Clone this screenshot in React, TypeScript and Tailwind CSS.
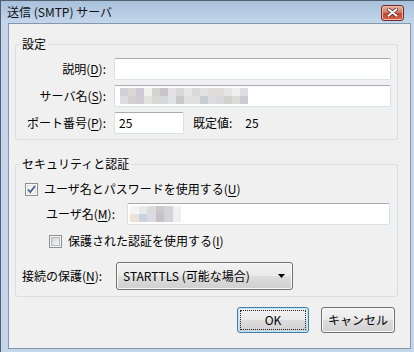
import clsx from "clsx";

const serverMosaic = [
  ["#d3d1d8", "#d8d7d3", "#cdcad6", "#f0f0ee", "#d4d3d0", "#c8c4c8", "#e2e2e4", "#d8d7d5", "#e5e6e8", "#ddd9d9", "#e0e2e4", "#dedddb", "#dddcdb", "#e5e4e2", "#efefef", "#dedde2"],
  ["#dcdbe0", "#d3d2ce", "#d0ccd7", "#e3e3de", "#d8d8d6", "#d6d9d9", "#e1e1e3", "#c9c9c9", "#e0dfe2", "#e3dedf", "#c8cfd3", "#dedcdc", "#dad9de", "#d2d2d0", "#dddcd4", "#cfcbd6"],
];

const userMosaic = [
  ["#f4f4f4", "#e9e9ec", "#dcdcdc", "#cbc7cd", "#d6d4d9", "#f0f0f0"],
  ["#eedfd7", "#c9d3e0", "#dbdbe1", "#c7c2ca", "#d4d4d7", "#eeeeee"],
];

function Mosaic({ rows, cell }: { rows: string[][]; cell: string }) {
  return (
    <div className="flex flex-col">
      {rows.map((r, i) => (
        <div key={i} className="flex">
          {r.map((c, j) => (
            <div key={j} className={clsx("h-[8px]", cell)} style={{ backgroundColor: c }} />
          ))}
        </div>
      ))}
    </div>
  );
}

function Key({ k }: { k: string }) {
  return <span className="underline underline-offset-[2px] decoration-1">{k}</span>;
}

function Input({ className, children }: { className?: string; children?: React.ReactNode }) {
  return (
    <div
      className={clsx(
        "h-[22px] rounded-[2px] border border-[#dbe0e6] border-t-[#a9abb1] bg-white flex items-center",
        className
      )}
    >
      {children}
    </div>
  );
}

function CheckBox({ checked }: { checked?: boolean }) {
  return (
    <svg width="13" height="13" viewBox="0 0 13 13" className="shrink-0">
      <defs>
        <linearGradient id={checked ? "cbA" : "cbB"} x1="0" y1="0" x2="1" y2="1">
          <stop offset="0" stopColor={checked ? "#f0f0f0" : "#cbcfd5"} />
          <stop offset="1" stopColor="#fafafa" />
        </linearGradient>
      </defs>
      <rect x="0.5" y="0.5" width="12" height="12" fill="#f6f6f6" stroke="#8f8f8f" />
      <rect x="2.5" y="2.5" width="8" height="8" fill={`url(#${checked ? "cbA" : "cbB"})`} stroke={checked ? "#e2e2e2" : "#b4b8bd"} />
      {checked && (
        <path d="M3 6.5 L5.3 9 L10 3" fill="none" stroke="#4c5f92" strokeWidth="1.8" />
      )}
    </svg>
  );
}

const btnBg =
  "bg-[linear-gradient(to_bottom,#f2f2f2_0%,#ebebeb_48%,#dddddd_52%,#cfcfcf_100%)]";

export default function App() {
  return (
    <div className="w-[414px] h-[352px] overflow-hidden flex flex-col border-l border-t border-[#52606f] pl-[7px] pr-[3px] pb-[3px] bg-[linear-gradient(to_bottom,#a9c1dc_0px,#c3d6ec_22px,#c3d6ec_100%)] text-[12px] leading-[16px] text-black font-['Noto_Sans_CJK_JP','Noto_Sans',sans-serif]">
      {/* title bar */}
      <div className="h-[22px] shrink-0 flex items-center justify-between">
        <span className="-ml-px text-[#111]">送信 (SMTP) サーバ</span>
        <div className="mr-[7px] mt-[1px] w-[23px] h-[16px] rounded-[3px] border border-[#6b2e2a] bg-[linear-gradient(to_bottom,#eab1a3_0%,#d67a64_45%,#c2442c_55%,#d9654a_100%)] flex items-center justify-center shadow-[inset_0_0_0_1px_#f0b7a8]">
          <svg width="11" height="9" viewBox="0 0 11 9">
            <path d="M1.5 1.2 L9.5 7.8 M9.5 1.2 L1.5 7.8" stroke="#5a2d2a" strokeWidth="3.6" strokeLinecap="round" />
            <path d="M1.5 1.2 L9.5 7.8 M9.5 1.2 L1.5 7.8" stroke="#ffffff" strokeWidth="2" strokeLinecap="round" />
          </svg>
        </div>
      </div>

      {/* client area */}
      <div className="flex-1 border border-[#8397ad] bg-[#f0f0f0] pt-[12px] pl-[6px]">
        <fieldset className="w-[383px] rounded-[3px] border border-[#d5dfe5] pb-[5px]">
          <legend className="ml-[4px] px-[2px]">設定</legend>
          <div className="flex flex-col gap-[5px] pt-[6px]">
            <div className="flex items-center">
              <span className="w-[90px] text-right">
                説明(<Key k="D" />):
              </span>
              <Input className="ml-[8px] w-[277px]" />
            </div>
            <div className="flex items-center">
              <span className="w-[90px] text-right">
                サーバ名(<Key k="S" />):
              </span>
              <Input className="ml-[8px] w-[277px] pl-[5px]">
                <Mosaic rows={serverMosaic} cell="w-[8px]" />
              </Input>
            </div>
            <div className="flex items-center">
              <span className="w-[90px] text-right">
                ポート番号(<Key k="P" />):
              </span>
              <Input className="ml-[8px] w-[70px] pl-[4px]">25</Input>
              <span className="ml-[9px]">既定値:</span>
              <span className="ml-[13px]">25</span>
            </div>
          </div>
        </fieldset>

        <fieldset className="mt-[16px] w-[383px] rounded-[3px] border border-[#d5dfe5] pb-[6px]">
          <legend className="ml-[4px] px-[2px]">セキュリティと認証</legend>
          <div className="flex flex-col">
            <div className="mt-[9px] h-[16px] flex items-center pl-[9px]">
              <CheckBox checked />
              <span className="ml-[6px]">
                ユーザ名とパスワードを使用する(<Key k="U" />)
              </span>
            </div>
            <div className="mt-[6px] flex items-center pl-[30px]">
              <span className="w-[72px]">
                ユーザ名(<Key k="M" />):
              </span>
              <Input className="ml-[9px] w-[263px] pl-[2px]">
                <Mosaic rows={userMosaic} cell="w-[8.5px]" />
              </Input>
            </div>
            <div className="mt-[8px] h-[16px] flex items-center pl-[33px]">
              <CheckBox />
              <span className="ml-[6px]">
                保護された認証を使用する(<Key k="I" />)
              </span>
            </div>
            <div className="mt-[13px] flex items-center pl-[6px]">
              <span className="w-[84px]">
                接続の保護(<Key k="N" />):
              </span>
              <div
                className={clsx(
                  "ml-[10px] w-[177px] h-[28px] rounded-[3px] border border-[#707070] shadow-[inset_0_0_0_1px_#fbfbfb] flex items-center justify-between pl-[6px] pr-[7px]",
                  btnBg
                )}
              >
                <span>STARTTLS (可能な場合)</span>
                <svg width="7" height="4" viewBox="0 0 7 4">
                  <path d="M0 0 H7 L3.5 4 Z" fill="#000" />
                </svg>
              </div>
            </div>
          </div>
        </fieldset>

        <div className="mt-[10px] flex justify-end gap-[12px] pr-[15px]">
          <div
            className={clsx(
              "w-[72px] h-[26px] rounded-[3px] border border-[#3c7fb1] shadow-[inset_0_0_0_1px_#c4e5f6] p-[2px]",
              btnBg
            )}
          >
            <div className="w-full h-full border border-dotted border-[#222] flex items-center justify-center">
              OK
            </div>
          </div>
          <div
            className={clsx(
              "w-[74px] h-[26px] rounded-[3px] border border-[#707070] shadow-[inset_0_0_0_1px_#fbfbfb] flex items-center justify-center",
              btnBg
            )}
          >
            キャンセル
          </div>
        </div>
      </div>
    </div>
  );
}
